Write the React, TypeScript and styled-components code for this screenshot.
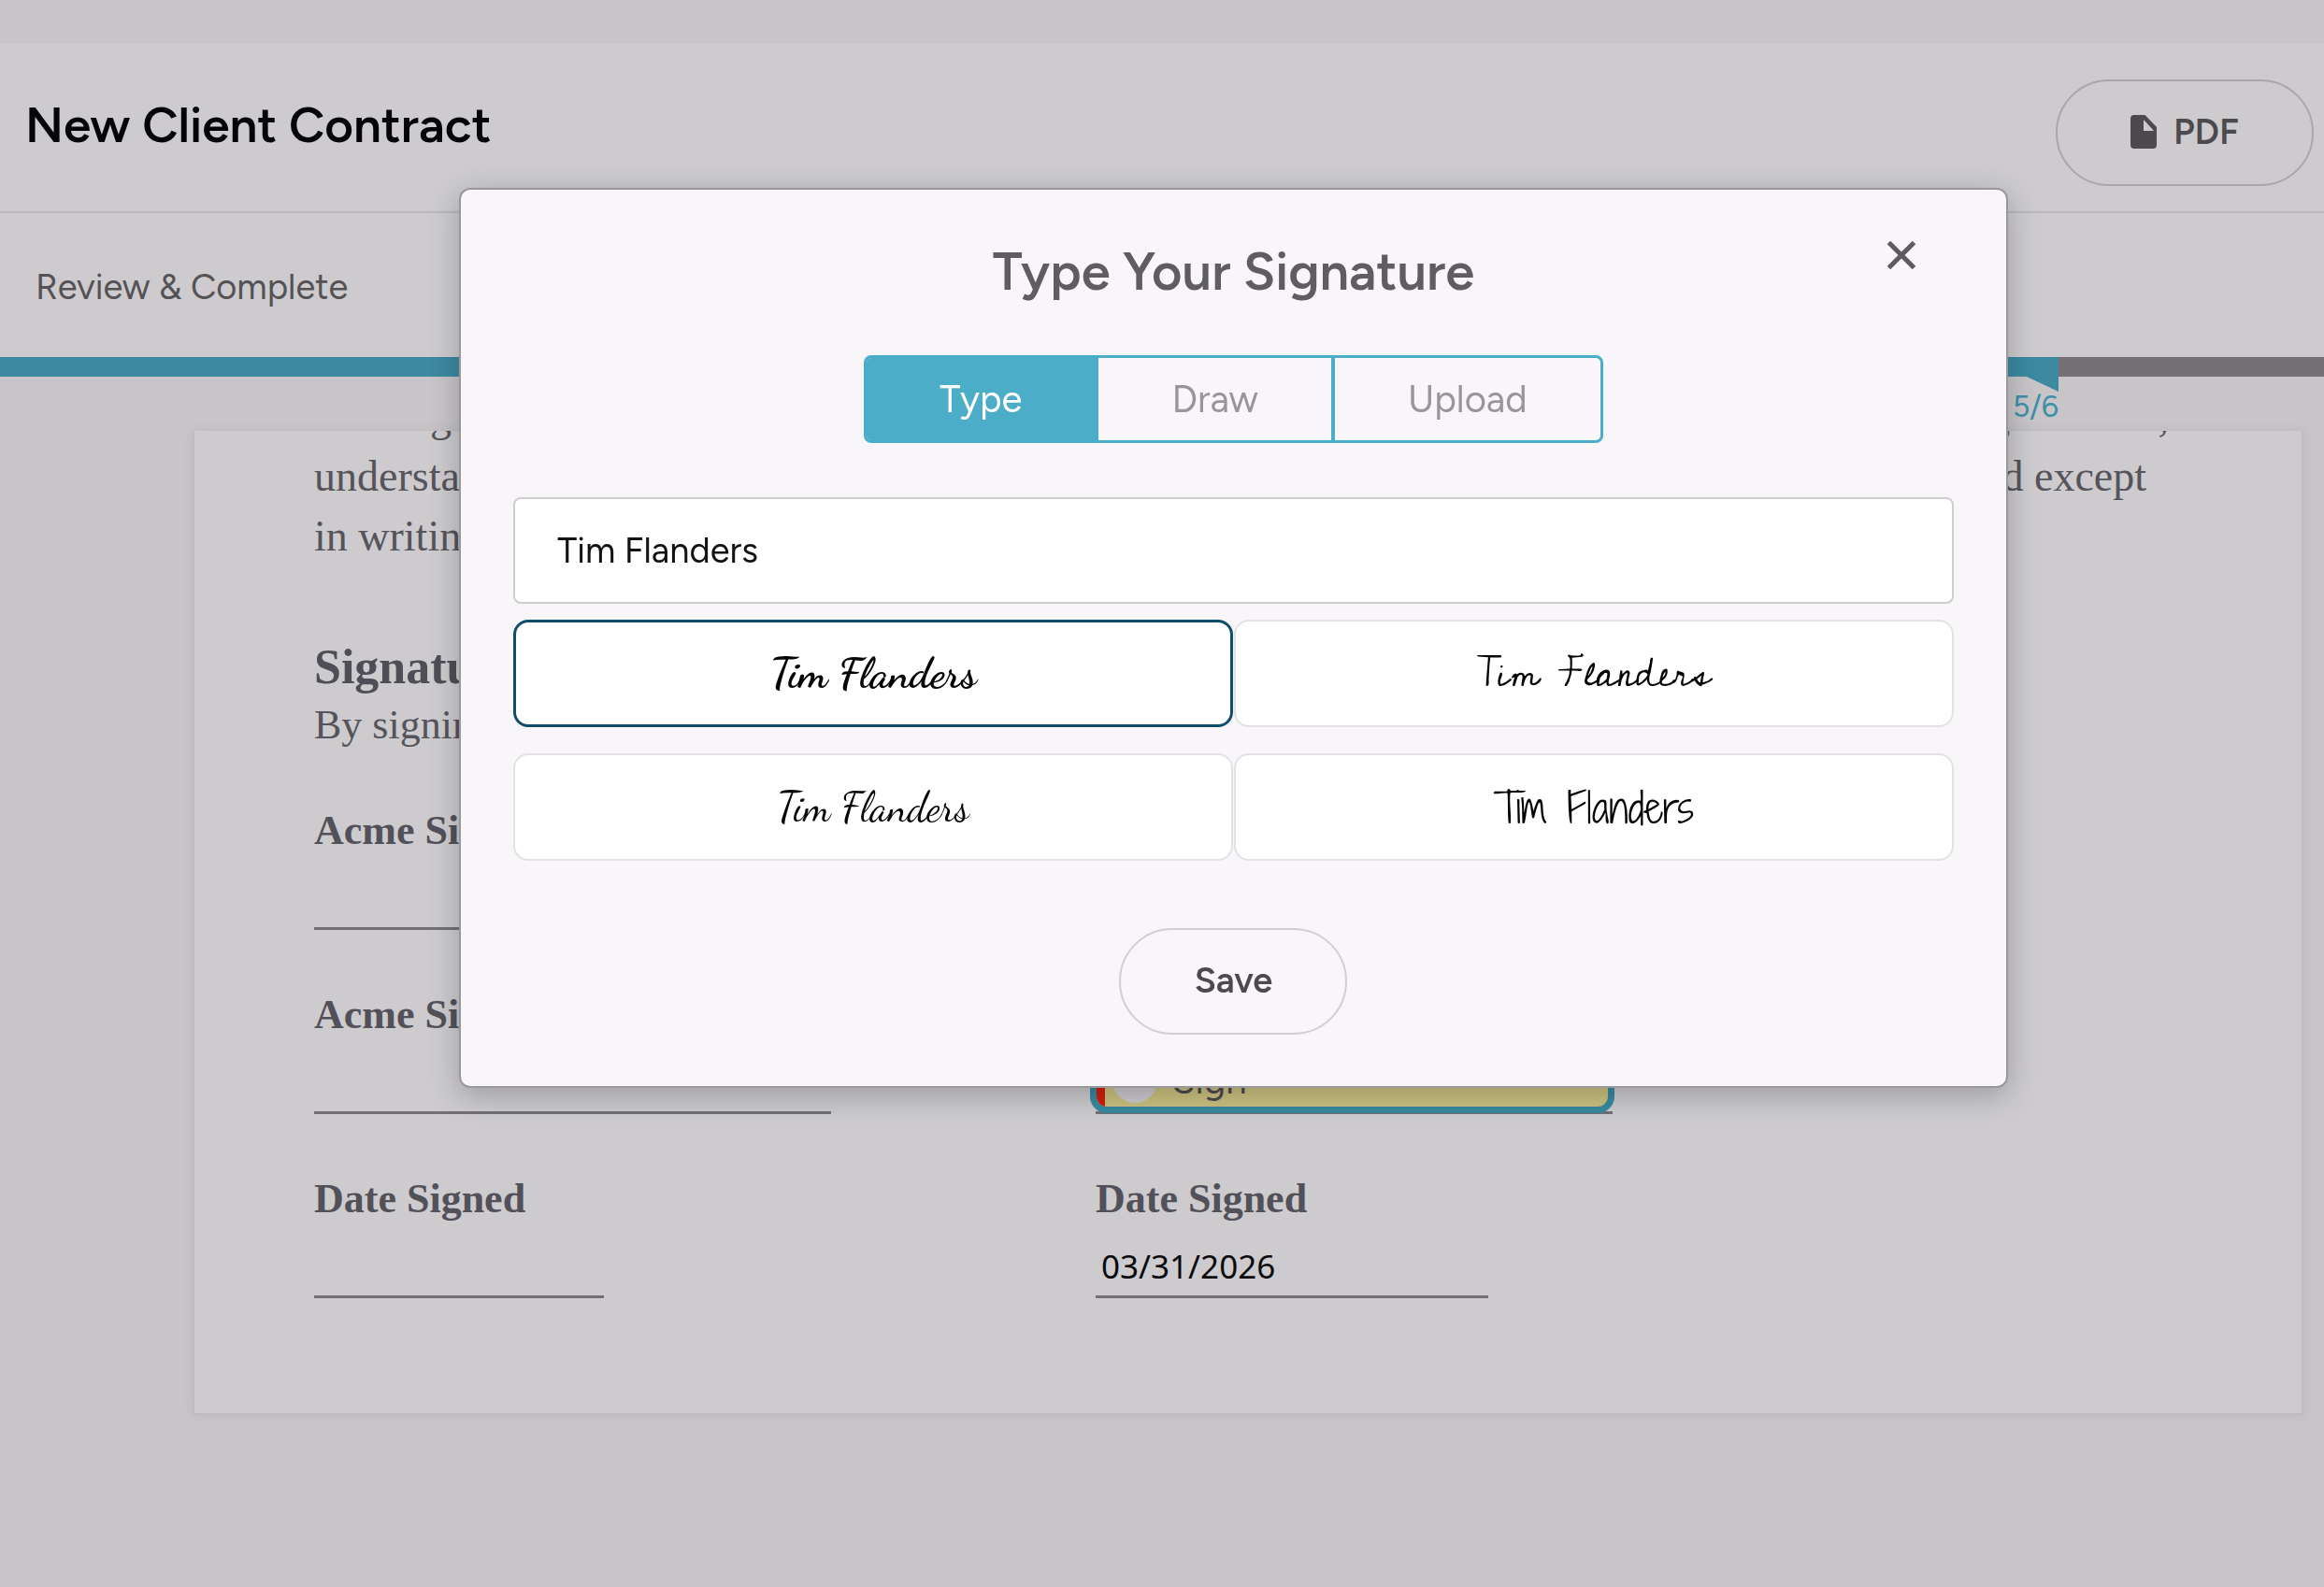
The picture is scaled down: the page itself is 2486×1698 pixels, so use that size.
import React, { useState } from "react";
import styled, { createGlobalStyle, css } from "styled-components";

const sans = `Figtree, Lato, "Liberation Sans", sans-serif`;
const serif = `"Liberation Serif", serif`;

const GlobalStyle = createGlobalStyle`
  *, *::before, *::after { box-sizing: border-box; }
  body { margin: 0; background: #c7c5c8; font-family: ${sans}; }
  button, input { font: inherit; color: inherit; margin: 0; }
  h1, h2, h3, p { margin: 0; }
`;

const Page = styled.div`
  min-height: 100vh;
  padding-top: 47px;
  overflow: hidden;
`;

const Header = styled.header`
  display: flex;
  align-items: center;
  justify-content: space-between;
  height: 181px;
  padding: 10px 11px 0 27px;
  background: #cdcbce;
  border-bottom: 2px solid #b9b7ba;
`;

const PageTitle = styled.h1`
  padding-bottom: 16px;
  font-size: 53px;
  line-height: 64px;
  font-weight: 600;
  color: #050406;
`;

const PillButton = styled.button<{ $width: number; $edge: string }>`
  display: flex;
  align-items: center;
  justify-content: center;
  gap: 18px;
  width: ${(p) => p.$width}px;
  height: 114px;
  padding: 0 0 2px;
  border: 2px solid ${(p) => p.$edge};
  border-radius: 57px;
  background: transparent;
  font-size: 38px;
  line-height: 44px;
  font-weight: 600;
  color: #4c4a4d;
`;

const StepBar = styled.div`
  display: flex;
  align-items: center;
  height: 154px;
  padding: 4px 38px 0;
  background: #cdcbce;
  font-size: 38px;
  line-height: 44px;
  color: #545255;
`;

const Track = styled.div`
  height: 21px;
  background: #737174;
`;

const Fill = styled.div`
  position: relative;
  height: 100%;
  background: #3c89a0;
`;

const Flag = styled.svg`
  position: absolute;
  top: 100%;
  right: 0;
  display: block;
  width: 34px;
  height: 16px;
`;

const StepCount = styled.span`
  position: absolute;
  top: 33px;
  right: 0;
  font-size: 32px;
  line-height: 40px;
  color: #3c8fa7;
`;

const Scroller = styled.main`
  padding: 58px 22px 0 206px;
`;

const Sheet = styled.article`
  overflow: hidden;
  padding: 0 142px 123px 128px;
  border: 2px solid #bebcbf;
  border-top: 0;
  background: #cdcbce;
  box-shadow: 0 0 12px rgba(0, 0, 0, 0.06);
  font-family: ${serif};
  font-size: 44px;
  line-height: 62px;
  color: #55545b;
`;

const Clause = styled.div`
  margin-top: -47px;
  font-size: 46px;
  line-height: 64px;
`;

const ClauseLine = styled.p<{ $inset?: number }>`
  display: flex;
  justify-content: space-between;
  padding-right: ${(p) => p.$inset ?? 0}px;
`;

const SectionTitle = styled.h2`
  margin-top: 77px;
  font-size: 52px;
  line-height: 62px;
  font-weight: 700;
  color: #4f4e57;
`;

const Fields = styled.div`
  display: grid;
  grid-template-columns: minmax(0, 836px) 1fr;
  row-gap: 60px;
  margin-top: 51px;
`;

const FieldLabel = styled.h3`
  display: block;
  font-size: 44px;
  line-height: 62px;
  font-weight: 700;
  color: #52515a;
`;

const Slot = styled.div<{ $width: number }>`
  display: flex;
  align-items: flex-end;
  width: ${(p) => p.$width}px;
  max-width: 100%;
  height: 75px;
  border-bottom: 3px solid #727076;
`;

const SignButton = styled.button`
  flex: none;
  display: flex;
  align-items: center;
  gap: 16px;
  width: calc(100% + 8px);
  height: 70px;
  margin: 0 -6px -2px;
  padding: 0;
  overflow: hidden;
  border: 7px solid #388aa0;
  border-radius: 18px;
  background: #cbc180;
  font-family: ${sans};
  font-size: 40px;
  line-height: 44px;
  color: #4c4a4d;
`;

const RequiredMark = styled.span`
  align-self: stretch;
  width: 9px;
  background: #d01f0e;
`;

const SignDot = styled.span`
  width: 48px;
  height: 48px;
  margin-left: -8px;
  border-radius: 50%;
  background: #cdcad0;
`;

const DateInput = styled.input`
  width: 100%;
  height: 62px;
  padding: 0 6px;
  border: 0;
  background: transparent;
  font-family: "Noto Sans", sans-serif;
  font-size: 35px;
  color: #0b0a0c;
`;

const Overlay = styled.div`
  position: fixed;
  inset: 0;
  display: flex;
  align-items: flex-start;
  justify-content: center;
  padding: 201px 0 0 153px;
`;

const Dialog = styled.section`
  position: relative;
  display: flex;
  flex-direction: column;
  align-items: center;
  width: 71%;
  padding: 56px 56px 55px;
  border: 2px solid #99979a;
  border-radius: 12px;
  background: #f8f6f9;
  box-shadow: 0 8px 32px rgba(0, 0, 0, 0.24);
`;

const DialogTitle = styled.h2`
  font-size: 56px;
  line-height: 64px;
  font-weight: 600;
  color: #5f5d60;
`;

const CloseButton = styled.button`
  position: absolute;
  top: 42px;
  right: 84px;
  display: flex;
  padding: 12px;
  border: 0;
  background: transparent;
  color: #5d5b5e;
`;

const Tabs = styled.div`
  display: flex;
  margin-top: 57px;
  overflow: hidden;
  border: 3px solid #4cadc9;
  border-radius: 8px;
`;

const Tab = styled.button<{ $active: boolean }>`
  height: 88px;
  padding: 0 78px;
  border: 0;
  background: transparent;
  font-size: 40px;
  line-height: 48px;
  color: #98969a;

  & + & {
    border-left: 4px solid #4cadc9;
  }
  ${(p) =>
    p.$active &&
    css`
      background: #4cadc9;
      color: #ffffff;
    `}
`;

const NameInput = styled.input`
  width: 100%;
  height: 114px;
  margin-top: 58px;
  padding: 0 45px;
  border: 2px solid #cfcdd0;
  border-radius: 8px;
  background: #ffffff;
  font-size: 38px;
  color: #121113;
`;

const Choices = styled.div`
  display: grid;
  grid-template-columns: 1fr 1fr;
  gap: 28px 1px;
  width: 100%;
  margin: 17px 0 72px;
`;

const Choice = styled.button<{ $selected: boolean; $face: string; $size: number; $weight: number }>`
  height: 115px;
  padding: 0;
  border: ${(p) => (p.$selected ? "3px solid #0f4d6c" : "2px solid #e3e1e4")};
  border-radius: 16px;
  background: #ffffff;
  font-family: ${(p) => p.$face}, "Dancing Script", cursive;
  font-size: ${(p) => p.$size}px;
  font-weight: ${(p) => p.$weight};
  color: #050505;
`;

const faces = [
  { face: `Satisfy`, size: 46, weight: 700 },
  { face: `"Cedarville Cursive"`, size: 44, weight: 400 },
  { face: `"Dancing Script"`, size: 44, weight: 400 },
  { face: `"Shadows Into Light Two"`, size: 44, weight: 400 },
];

const tabs = ["Type", "Draw", "Upload"];

function FileIcon() {
  return (
    <svg width="28" height="36" viewBox="0 0 28 36" aria-hidden="true">
      <path
        fill="currentColor"
        fillRule="evenodd"
        d="M4 0H15.500L28 13V32a4 4 0 0 1-4 4H4a4 4 0 0 1-4-4V4a4 4 0 0 1 4-4ZM14 5V17H25Z"
      />
    </svg>
  );
}

function CloseIcon() {
  return (
    <svg width="32" height="32" viewBox="0 0 32 32" aria-hidden="true">
      <path d="M2.500 2.500 29.500 29.500M29.500 2.500 2.500 29.500" stroke="currentColor" strokeWidth="5" />
    </svg>
  );
}

export default function App() {
  const [tab, setTab] = useState("Type");
  const [name, setName] = useState("Tim Flanders");
  const [choice, setChoice] = useState(0);

  return (
    <>
      <GlobalStyle />
      <Page>
        <Header>
          <PageTitle>New Client Contract</PageTitle>
          <PillButton type="button" $width={276} $edge="#a9a7aa">
            <FileIcon />
            PDF
          </PillButton>
        </Header>
        <StepBar>Review &amp; Complete</StepBar>
        <Track>
          <Fill style={{ width: "88.57%" }}>
            <Flag viewBox="0 0 34 16" aria-hidden="true">
              <path d="M0 0H34V16Z" fill="#3c89a0" />
            </Flag>
            <StepCount>5/6</StepCount>
          </Fill>
        </Track>
        <Scroller>
          <Sheet>
            <Clause>
              <ClauseLine>
                <span>This Agreement</span>
                <span>negotiations,</span>
              </ClauseLine>
              <ClauseLine $inset={24}>
                <span>understandings</span>
                <span>amended except</span>
              </ClauseLine>
              <ClauseLine>in writing</ClauseLine>
            </Clause>
            <SectionTitle>Signatures</SectionTitle>
            <p>By signing</p>
            <Fields>
              <div>
                <FieldLabel>Acme Signer</FieldLabel>
                <Slot $width={553} />
              </div>
              <div />
              <div>
                <FieldLabel>Acme Signature</FieldLabel>
                <Slot $width={553} />
              </div>
              <div>
                <FieldLabel>Signature</FieldLabel>
                <Slot $width={553}>
                  <SignButton type="button">
                    <RequiredMark />
                    <SignDot />
                    Sign
                  </SignButton>
                </Slot>
              </div>
              <div>
                <FieldLabel>Date Signed</FieldLabel>
                <Slot $width={310} />
              </div>
              <div>
                <FieldLabel as="label" htmlFor="date-signed">
                  Date Signed
                </FieldLabel>
                <Slot $width={420}>
                  <DateInput id="date-signed" readOnly value="03/31/2026" />
                </Slot>
              </div>
            </Fields>
          </Sheet>
        </Scroller>
      </Page>

      <Overlay>
        <Dialog role="dialog" aria-labelledby="dialog-title">
          <DialogTitle id="dialog-title">Type Your Signature</DialogTitle>
          <CloseButton type="button" aria-label="Close">
            <CloseIcon />
          </CloseButton>
          <Tabs role="tablist">
            {tabs.map((t) => (
              <Tab key={t} type="button" role="tab" aria-selected={tab === t} $active={tab === t} onClick={() => setTab(t)}>
                {t}
              </Tab>
            ))}
          </Tabs>
          <NameInput aria-label="Your name" value={name} onChange={(e) => setName(e.target.value)} />
          <Choices>
            {faces.map((f, i) => (
              <Choice
                key={f.face}
                type="button"
                aria-pressed={choice === i}
                $selected={choice === i}
                $face={f.face}
                $size={f.size}
                $weight={f.weight}
                onClick={() => setChoice(i)}
              >
                {name}
              </Choice>
            ))}
          </Choices>
          <PillButton type="button" $width={244} $edge="#d1cfd2">
            Save
          </PillButton>
        </Dialog>
      </Overlay>
    </>
  );
}
